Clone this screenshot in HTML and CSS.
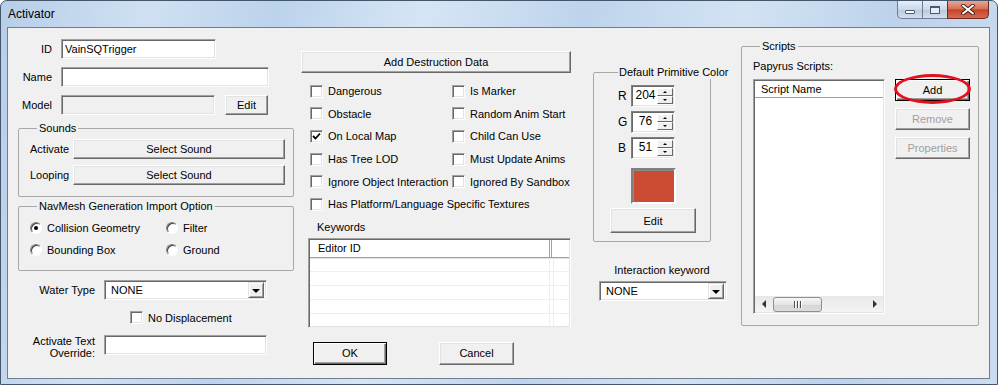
FILE: index.html
```html
<!DOCTYPE html>
<html>
<head>
    <meta charset="UTF-8">
    <title>Activator</title>
    <link rel="stylesheet" href="styles.css">
</head>
<body>
    <div class="window">
        <div class="titlebar">
            <span class="title">Activator</span>
            <div class="caption">
                <span class="cap cap-min"><i></i></span>
                <span class="cap cap-max"><i></i></span>
                <span class="cap cap-close">
                    <svg width="14" height="11" viewBox="0 0 14 11"><path d="M2 1.5 L12 9.5 M12 1.5 L2 9.5" stroke="#3a1a12" stroke-width="3.6" stroke-linecap="round"/><path d="M2 1.5 L12 9.5 M12 1.5 L2 9.5" stroke="#fff" stroke-width="2" stroke-linecap="round"/></svg>
                </span>
            </div>
        </div>

        <div class="client">
            <!-- left column -->
            <div class="col col-left">
                <div class="field">
                    <label>ID</label>
                    <input class="edit edit-id" value="VainSQTrigger">
                </div>
                <div class="field">
                    <label>Name</label>
                    <input class="edit edit-name" value="">
                </div>
                <div class="field">
                    <label>Model</label>
                    <input class="edit edit-model" value="" disabled>
                    <button class="btn btn-edit">Edit</button>
                </div>

                <fieldset class="group group-sounds">
                    <legend>Sounds</legend>
                    <div class="snd-row">
                        <span class="snd-label">Activate</span>
                        <button class="btn btn-sound">Select Sound</button>
                    </div>
                    <div class="snd-row">
                        <span class="snd-label">Looping</span>
                        <button class="btn btn-sound">Select Sound</button>
                    </div>
                </fieldset>

                <fieldset class="group group-navmesh">
                    <legend>NavMesh Generation Import Option</legend>
                    <div class="radio-grid">
                        <div class="opt"><span class="radio checked"></span>Collision Geometry</div>
                        <div class="opt"><span class="radio"></span>Filter</div>
                        <div class="opt"><span class="radio"></span>Bounding Box</div>
                        <div class="opt"><span class="radio"></span>Ground</div>
                    </div>
                </fieldset>

                <div class="field field-wide water-row">
                    <label>Water Type</label>
                    <div class="combo combo-water">
                        <span class="combo-text">NONE</span>
                        <span class="combo-btn"><i></i></span>
                    </div>
                </div>

                <div class="opt no-disp"><span class="check"></span>No Displacement</div>

                <div class="field field-wide override-row">
                    <label>Activate Text<br>Override:</label>
                    <input class="edit edit-override" value="">
                </div>
            </div>

            <!-- middle column -->
            <div class="col col-mid">
                <button class="btn btn-destruct">Add Destruction Data</button>

                <div class="check-grid">
                    <div class="opt"><span class="check"></span>Dangerous</div>
                    <div class="opt"><span class="check"></span>Is Marker</div>
                    <div class="opt"><span class="check"></span>Obstacle</div>
                    <div class="opt"><span class="check"></span>Random Anim Start</div>
                    <div class="opt"><span class="check checked"><svg width="9" height="9" viewBox="0 0 9 9"><path d="M1 4 L3.5 6.5 L8 1.5" fill="none" stroke="#000" stroke-width="1.8"/></svg></span>On Local Map</div>
                    <div class="opt"><span class="check"></span>Child Can Use</div>
                    <div class="opt"><span class="check"></span>Has Tree LOD</div>
                    <div class="opt"><span class="check"></span>Must Update Anims</div>
                    <div class="opt"><span class="check"></span>Ignore Object Interaction</div>
                    <div class="opt"><span class="check"></span>Ignored By Sandbox</div>
                    <div class="opt span2"><span class="check"></span>Has Platform/Language Specific Textures</div>
                </div>

                <div class="kw-label">Keywords</div>
                <div class="listview kw-list">
                    <div class="lv-header">
                        <span class="lv-col1">Editor ID</span>
                        <span class="lv-col2"></span>
                    </div>
                    <div class="lv-row"><span></span><span></span></div>
                    <div class="lv-row"><span></span><span></span></div>
                    <div class="lv-row"><span></span><span></span></div>
                    <div class="lv-row"><span></span><span></span></div>
                    <div class="lv-row"><span></span><span></span></div>
                </div>

                <div class="dlg-buttons">
                    <button class="btn btn-ok">OK</button>
                    <button class="btn btn-cancel">Cancel</button>
                </div>
            </div>

            <!-- color column -->
            <div class="col col-color">
                <fieldset class="group group-color">
                    <legend>Default Primitive Color</legend>
                    <div class="spin-row">
                        <span class="spin-label">R</span>
                        <div class="spin"><span class="spin-val">204</span><span class="spin-arrows"><b class="up"></b><b class="down"></b></span></div>
                    </div>
                    <div class="spin-row">
                        <span class="spin-label">G</span>
                        <div class="spin"><span class="spin-val">76</span><span class="spin-arrows"><b class="up"></b><b class="down"></b></span></div>
                    </div>
                    <div class="spin-row">
                        <span class="spin-label">B</span>
                        <div class="spin"><span class="spin-val">51</span><span class="spin-arrows"><b class="up"></b><b class="down"></b></span></div>
                    </div>
                    <div class="swatch"></div>
                    <button class="btn btn-color-edit">Edit</button>
                </fieldset>

                <div class="ik-label">Interaction keyword</div>
                <div class="combo combo-ik">
                    <span class="combo-text">NONE</span>
                    <span class="combo-btn"><i></i></span>
                </div>
            </div>

            <!-- scripts column -->
            <div class="col col-scripts">
                <fieldset class="group group-scripts">
                    <legend>Scripts</legend>
                    <div class="papyrus-label">Papyrus Scripts:</div>
                    <div class="scripts-body">
                        <div class="listview script-list">
                            <div class="sl-header">Script Name</div>
                            <div class="sl-body"></div>
                            <div class="hscroll">
                                <span class="hs-arrow hs-left"></span>
                                <span class="hs-thumb"><i></i><i></i><i></i></span>
                                <span class="hs-track"></span>
                                <span class="hs-arrow hs-right"></span>
                            </div>
                        </div>
                        <div class="script-buttons">
                            <div class="add-wrap">
                                <button class="btn btn-default">Add</button>
                                <span class="ring"></span>
                            </div>
                            <button class="btn" disabled>Remove</button>
                            <button class="btn" disabled>Properties</button>
                        </div>
                    </div>
                </fieldset>
            </div>
        </div>
    </div>
</body>
</html>
```

FILE: styles.css
```css
* {
    margin: 0;
    padding: 0;
    box-sizing: border-box;
}

body {
    width: 998px;
    height: 385px;
    overflow: hidden;
    font-family: "Liberation Sans", Arial, sans-serif;
    font-size: 11px;
    color: #000;
    background: #fff;
}

/* window frame */
.window {
    height: 385px;
    border: 1px solid #46566a;
    border-radius: 7px 7px 0 0;
    padding: 0 7px 5px 6px;
    background: linear-gradient(100deg, #b7cee8 0%, #cfe0f2 14%, #bcd3ec 26%, #d6e5f5 40%, #bed4ec 55%, #d2e2f3 70%, #bdd3eb 84%, #cadcf0 100%);
}

.titlebar {
    height: 26px;
    display: flex;
    align-items: flex-start;
}

.title {
    font-size: 12px;
    margin: 6px 0 0 1px;
    color: #000;
}

.caption {
    margin-left: auto;
    margin-right: 1px;
    display: flex;
}

.cap {
    height: 18px;
    display: flex;
    align-items: center;
    justify-content: center;
    border: 1px solid #6d7e93;
    border-top: none;
    background: linear-gradient(#e7eef7, #cad8e8 50%, #b7c8dc 51%, #d2e0ef);
}

.cap-min {
    width: 25px;
    border-radius: 0 0 0 5px;
    border-right: none;
}

.cap-min i {
    width: 10px;
    height: 4px;
    margin-top: 5px;
    border: 1px solid #4a5a6e;
    background: #fff;
    border-radius: 1px;
}

.cap-max {
    width: 25px;
    border-right: none;
}

.cap-max i {
    width: 10px;
    height: 8px;
    border: 1px solid #4a5a6e;
    border-top-width: 2px;
    background: #e6edf6;
}

.cap-close {
    width: 42px;
    border-color: #6e2a20;
    border-radius: 0 0 5px 0;
    background: linear-gradient(#e9a593, #d87258 45%, #c4432a 52%, #d66b4f);
}

/* client area */
.client {
    height: 352px;
    border: 1px solid #6f7e90;
    background: #f0f0f0;
    display: flex;
    align-items: flex-start;
}

.col {
    display: flex;
    flex-direction: column;
}

.col-left {
    width: 276px;
    margin: 11px 0 0 10px;
}

.col-mid {
    width: 270px;
    margin: 23px 0 0 7px;
}

.col-color {
    width: 134px;
    margin: 38px 0 0 22px;
}

.col-scripts {
    width: 238px;
    margin: 12px 0 0 14px;
}

/* common controls */
.edit {
    height: 20px;
    font: inherit;
    padding: 0 3px;
    background: #fff;
    border: 1px solid;
    border-color: #a0a0a0 #fff #fff #a0a0a0;
    box-shadow: inset 1px 1px #696969, inset -1px -1px #e3e3e3;
    outline: none;
    color: #000;
}

.edit:disabled {
    background: #f0f0f0;
}

.btn {
    height: 22px;
    font: inherit;
    color: #000;
    background: #f0f0f0;
    border: 1px solid;
    border-color: #fff #696969 #696969 #fff;
    box-shadow: inset -1px -1px #a0a0a0, inset 1px 1px #e3e3e3;
}

.btn:disabled {
    color: #a0a0a0;
}

.btn-default {
    border-color: #000;
    box-shadow: inset 1px 1px #fff, inset -1px -1px #696969, inset -2px -2px #a0a0a0;
}

.check {
    width: 13px;
    height: 13px;
    flex: none;
    display: inline-flex;
    align-items: center;
    justify-content: center;
    background: #fff;
    border: 1px solid;
    border-color: #a0a0a0 #fff #fff #a0a0a0;
    box-shadow: inset 1px 1px #696969, inset -1px -1px #e3e3e3;
    margin-right: 5px;
}

.radio {
    width: 12px;
    height: 12px;
    flex: none;
    border-radius: 50%;
    background: #fff;
    border: 1px solid;
    border-color: #808080 #fff #fff #808080;
    box-shadow: inset 1px 1px #404040;
    margin-right: 5px;
    display: inline-flex;
    align-items: center;
    justify-content: center;
}

.radio.checked::after {
    content: "";
    width: 4px;
    height: 4px;
    border-radius: 50%;
    background: #000;
}

.opt {
    display: flex;
    align-items: center;
    white-space: nowrap;
}

.group {
    border: 1px solid #a8a8a8;
    border-radius: 2px;
    min-width: 0;
}

.group legend {
    margin-left: 7px;
    padding: 0 2px;
    line-height: 13px;
    white-space: nowrap;
}

.combo {
    height: 20px;
    display: flex;
    align-items: center;
    background: #fff;
    border: 1px solid;
    border-color: #a0a0a0 #fff #fff #a0a0a0;
    box-shadow: inset 1px 1px #696969, inset -1px -1px #e3e3e3;
    padding: 2px 2px 2px 6px;
}

.combo-text {
    flex: 1;
}

.combo-btn {
    width: 16px;
    height: 16px;
    display: flex;
    align-items: center;
    justify-content: center;
    background: #f0f0f0;
    border: 1px solid;
    border-color: #e3e3e3 #696969 #696969 #e3e3e3;
    box-shadow: inset 1px 1px #fff, inset -1px -1px #a0a0a0;
}

.combo-btn i {
    border-left: 4px solid transparent;
    border-right: 4px solid transparent;
    border-top: 4px solid #000;
    margin-top: 1px;
}

/* left column */
.field {
    display: flex;
    align-items: center;
    height: 20px;
}

.field + .field {
    margin-top: 8px;
}

.field label {
    width: 34px;
    margin-right: 9px;
    text-align: right;
}

.edit-id {
    width: 155px;
}

.edit-name {
    width: 208px;
}

.edit-model {
    width: 154px;
}

.btn-edit {
    width: 43px;
    height: 20px;
    margin-left: 10px;
}

.group-sounds {
    margin-top: 7px;
    padding: 4px 8px 11px 11px;
}

.snd-row {
    display: flex;
    align-items: center;
}

.snd-row + .snd-row {
    margin-top: 6px;
}

.snd-label {
    width: 43px;
}

.btn-sound {
    flex: 1;
    height: 20px;
}

.group-navmesh {
    margin-top: 3px;
    padding: 4px 8px 9px 11px;
}

.radio-grid {
    display: grid;
    grid-template-columns: 136px auto;
    grid-auto-rows: 22px;
    align-items: center;
}

.field-wide label {
    width: 77px;
}

.water-row {
    margin-top: 9px;
}

.combo-water {
    width: 163px;
}

.no-disp {
    margin-top: 11px;
    padding-left: 112px;
}

.override-row {
    margin-top: 10px;
    height: auto;
    align-items: flex-start;
}

.override-row label {
    line-height: 12px;
    padding-top: 1px;
}

.edit-override {
    width: 163px;
    margin-top: 1px;
}

/* middle column */
.btn-destruct {
    width: 270px;
}

.check-grid {
    margin-top: 7px;
    padding-left: 9px;
    display: grid;
    grid-template-columns: 142px auto;
    grid-auto-rows: 22.6px;
    align-items: center;
}

.span2 {
    grid-column: span 2;
}

.kw-label {
    margin-top: 5px;
    padding-left: 16px;
    line-height: 13px;
}

.listview {
    background: #fff;
    border: 1px solid;
    border-color: #a0a0a0 #fff #fff #a0a0a0;
    box-shadow: inset 1px 1px #696969, inset -1px -1px #e3e3e3;
    padding: 1px;
}

.kw-list {
    margin: 4px 0 0 7px;
    width: 263px;
    height: 90px;
}

.lv-header {
    height: 18px;
    display: flex;
    border-bottom: 1px solid #a0a0a0;
    box-shadow: 0 1px #e3e3e3;
}

.lv-col1 {
    width: 240px;
    padding: 2px 0 0 8px;
    border-right: 1px solid #a0a0a0;
    box-shadow: 1px 0 #fff, 2px 0 #a0a0a0;
}

.lv-row {
    height: 14px;
    display: flex;
    border-bottom: 1px solid #eeeeee;
}

.lv-row span:first-child {
    width: 240px;
    border-right: 1px solid #eeeeee;
}

.lv-row span:last-child {
    width: 4px;
    border-right: 1px solid #eeeeee;
}

.dlg-buttons {
    margin-top: 14px;
    padding-left: 12px;
    display: flex;
    gap: 52px;
}

.btn-ok {
    width: 74px;
    height: 23px;
    border-color: #000;
    box-shadow: inset 1px 1px #fff, inset -1px -1px #696969, inset -2px -2px #a0a0a0;
}

.btn-cancel {
    width: 75px;
    height: 23px;
}

/* color column */
.group-color {
    width: 118px;
    padding: 6px 0 8px 16px;
}

.group-color legend {
    margin-left: 8px;
    padding: 0 1px;
}

.spin-row {
    display: flex;
    align-items: center;
    height: 22px;
    margin-left: 8px;
}

.spin-row + .spin-row {
    margin-top: 4px;
}

.spin-label {
    width: 13px;
    font-size: 12px;
}

.spin {
    width: 44px;
    height: 22px;
    display: flex;
    background: #fff;
    border: 1px solid;
    border-color: #808080 #fff #fff #808080;
    box-shadow: inset 1px 1px #696969, inset -1px -1px #e3e3e3;
    padding: 2px 1px 2px 2px;
}

.spin-val {
    flex: 1;
    text-align: center;
    font-size: 12px;
    line-height: 14px;
}

.spin-arrows {
    width: 16px;
    display: flex;
    flex-direction: column;
}

.spin-arrows b {
    flex: 1;
    display: flex;
    align-items: center;
    justify-content: center;
    background: #f0f0f0;
    border: 1px solid;
    border-color: #fff #696969 #696969 #fff;
}

.spin-arrows b::after {
    content: "";
    border-left: 2px solid transparent;
    border-right: 2px solid transparent;
}

.spin-arrows .up::after {
    border-bottom: 2px solid #000;
}

.spin-arrows .down::after {
    border-top: 2px solid #000;
}

.swatch {
    width: 45px;
    height: 36px;
    margin: 9px 0 0 21px;
    background: #cc4c33;
    border: 2px solid;
    border-color: #808080 #fff #fff #808080;
    box-shadow: inset 1px 1px #8a8a8a;
}

.btn-color-edit {
    width: 86px;
    height: 25px;
    margin-top: 4px;
}

.ik-label {
    margin-top: 22px;
    padding-left: 4px;
    text-align: center;
    line-height: 13px;
}

.combo-ik {
    width: 128px;
    margin: 4px 0 0 6px;
}

/* scripts column */
.group-scripts {
    width: 238px;
    padding: 7px 8px 11px 11px;
}

.papyrus-label {
    line-height: 13px;
}

.scripts-body {
    margin-top: 6px;
    display: flex;
    align-items: flex-start;
}

.script-list {
    width: 133px;
    height: 235px;
    display: flex;
    flex-direction: column;
}

.sl-header {
    height: 17px;
    padding: 2px 0 0 6px;
    border-bottom: 1px solid #a0a0a0;
}

.sl-body {
    flex: 1;
}

.hscroll {
    height: 16px;
    display: flex;
    align-items: center;
    background: linear-gradient(#e8e8e8, #f4f4f4);
}

.hs-arrow {
    width: 17px;
    height: 16px;
    display: flex;
    align-items: center;
    justify-content: center;
}

.hs-left::after {
    content: "";
    border-top: 4px solid transparent;
    border-bottom: 4px solid transparent;
    border-right: 4px solid #333;
}

.hs-right::after {
    content: "";
    border-top: 4px solid transparent;
    border-bottom: 4px solid transparent;
    border-left: 4px solid #333;
}

.hs-thumb {
    width: 49px;
    height: 15px;
    margin-left: 1px;
    display: flex;
    align-items: center;
    justify-content: center;
    gap: 1px;
    border: 1px solid #8e8f8f;
    border-radius: 3px;
    background: linear-gradient(#f6f6f6, #e4e4e4 50%, #d6d6d6 51%, #dcdcdc);
}

.hs-thumb i {
    width: 2px;
    height: 7px;
    background: #4d4d4d;
    border-right: 1px solid #fff;
}

.hs-track {
    flex: 1;
}

.script-buttons {
    margin-left: 10px;
    display: flex;
    flex-direction: column;
}

.script-buttons .btn {
    width: 75px;
    height: 22px;
}

.script-buttons > .btn {
    margin-top: 7px;
}

.add-wrap {
    position: relative;
}

.ring {
    position: absolute;
    left: -1px;
    top: -5px;
    width: 77px;
    height: 30px;
    border: 3px solid #e3101b;
    border-radius: 50%;
}
```
